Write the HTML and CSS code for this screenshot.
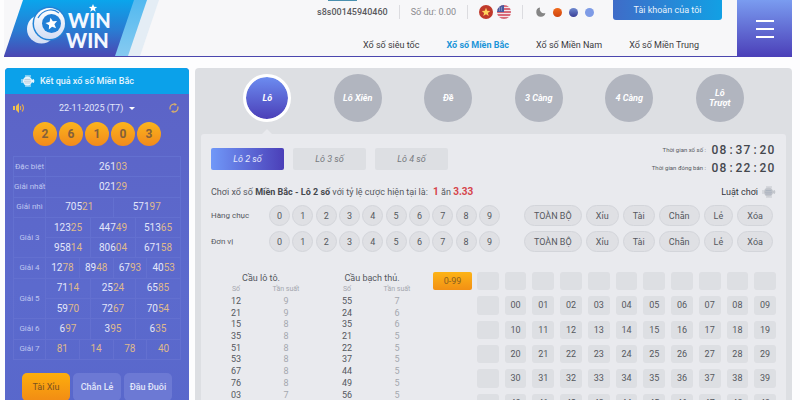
FILE: index.html
```html
<!DOCTYPE html>
<html lang="vi">
<head>
    <meta charset="UTF-8">
    <meta name="viewport" content="width=device-width, initial-scale=1.0">
    <title>WIN WIN - Xổ số Miền Bắc</title>
    <link rel="stylesheet" href="styles.css">
</head>
<body>

<svg width="0" height="0" class="defs">
    <defs>
        <linearGradient id="logoBg" x1="0" y1="0" x2="0" y2="1">
            <stop offset="0" stop-color="#0aa5ec"/>
            <stop offset="0.55" stop-color="#2a7bd2"/>
            <stop offset="1" stop-color="#4a48b4"/>
        </linearGradient>
        <linearGradient id="band" x1="0" y1="0" x2="0" y2="1">
            <stop offset="0" stop-color="#52b9f0"/>
            <stop offset="1" stop-color="#86caf0"/>
        </linearGradient>
        <linearGradient id="ballBg" x1="0" y1="0" x2="0" y2="1">
            <stop offset="0" stop-color="#ffffff"/>
            <stop offset="1" stop-color="#d3def4"/>
        </linearGradient>
    </defs>
    <symbol id="globe" viewBox="0 0 14 12">
        <path d="M4 1h6M4 11h6M1 4v4M12 4l1 2-1 2" fill="none" stroke="currentColor" stroke-width="1"/>
        <circle cx="6.5" cy="6" r="4.6" fill="currentColor"/>
        <path d="M3.5 4.4h6M3 6.2h7M3.5 8h6" stroke="#8f9bb0" stroke-opacity="0.6" stroke-width="0.8"/>
        <path d="M10 4.8h3v2.4h-3z" fill="currentColor"/>
    </symbol>
</svg>

<header class="header">
    <a class="logo" href="#">
        <svg width="156" height="56" viewBox="0 0 156 56">
            <path d="M140 0h15l-19 56h-16z" fill="#e4edf5"/>
            <path d="M126 0h17l-19 56h-17z" fill="url(#band)"/>
            <path d="M19 0h111l-19 56H0z" fill="url(#logoBg)"/>
            <circle cx="37.500" cy="29" r="14.500" fill="url(#ballBg)"/>
            <circle cx="45.500" cy="23.500" r="17" fill="#2383d6"/>
            <circle cx="45.500" cy="23.500" r="15.500" fill="url(#ballBg)"/>
            <path d="M34 18c5-9 15-10 21-5" fill="none" stroke="#2a84d8" stroke-width="1.200"/>
            <circle cx="47.500" cy="23.500" r="9.500" fill="#217fd6"/>
            <path d="M47.500 17.700l1.700 3.900 4.200.4-3.200 2.800 1 4.200-3.700-2.200-3.700 2.200 1-4.200-3.200-2.800 4.200-.4z" fill="#fff" transform="rotate(-10 47.5 23.5)"/>
            <path d="M89 4l1.200 2.700 3 .2-2.300 1.900.8 2.900L89 10.100l-2.700 1.600.8-2.900-2.300-1.900 3-.2z" fill="#fff"/>
            <text class="logo-text"><tspan x="64" y="28">WIN</tspan><tspan x="62" y="48">WIN</tspan></text>
        </svg>
    </a>
    <div class="header-main">
        <div class="top-bar">
            <span class="user">s8s00145940460</span>
            <span class="balance">Số dư: 0.00</span>
            <span class="flags">
                <svg width="14" height="14" viewBox="0 0 14 14">
                    <circle cx="7" cy="7" r="7" fill="#c0392b"/>
                    <path d="M7 2.800l1.200 2.900 3 .2-2.300 2 .8 3L7 9.300l-2.700 1.600.8-3-2.300-2 3-.2z" fill="#ffd35c"/>
                </svg>
                <svg width="14" height="14" viewBox="0 0 14 14">
                    <clipPath id="flagClip"><circle cx="7" cy="7" r="7"/></clipPath>
                    <g clip-path="url(#flagClip)">
                        <path d="M0 0h14v14H0z" fill="#f3e6e8"/>
                        <path d="M0 1h14M0 4h14M0 7h14M0 10h14M0 13h14" stroke="#cf4254" stroke-width="1.600"/>
                        <path d="M0 0h7v7H0z" fill="#4a5aa0"/>
                        <path d="M2 3h4M2 5h4" stroke="#c9cfe6" stroke-width="0.800" stroke-dasharray="1 1"/>
                    </g>
                </svg>
            </span>
            <span class="themes">
                <svg width="10" height="10" viewBox="0 0 10 10"><path d="M4 .6A4.600 4.600 0 1 0 9.400 6 4.200 4.200 0 0 1 4 .6z" fill="#858585"/></svg>
                <i class="dot dot-orange"></i>
                <i class="dot dot-navy"></i>
                <i class="dot dot-blue"></i>
            </span>
            <button class="account">Tài khoản của tôi</button>
        </div>
        <nav class="nav">
            <a href="#">Xổ số siêu tốc</a>
            <a href="#" class="active">Xổ số Miền Bắc</a>
            <a href="#">Xổ số Miền Nam</a>
            <a href="#">Xổ số Miền Trung</a>
        </nav>
    </div>
    <button class="menu" aria-label="Menu"><i></i><i></i><i></i></button>
</header>

<main class="container">
    <aside class="result">
        <h2 class="result-title">
            <svg width="14" height="12"><use href="#globe"/></svg>
            Kết quả xổ số Miền Bắc
        </h2>
        <div class="date-row">
            <svg width="12" height="10" viewBox="0 0 12 10">
                <path d="M0 3h2v4H0zM3 3l3-3v10L3 7z" fill="#f0bf4c"/>
                <path d="M7.500 3v4M9 1.500q3 3.500 0 7" fill="none" stroke="#d9a558" stroke-width="1.200"/>
            </svg>
            <span class="date">
                <select aria-label="Ngày"><option>22-11-2025 (T7)</option></select>
            </span>
            <svg width="10" height="10" viewBox="0 0 10 10">
                <path d="M1.300 6.500A4 4 0 0 1 6 1.200M8.700 3.500A4 4 0 0 1 4 8.800" fill="none" stroke="#d9b06a" stroke-width="1.200"/>
                <path d="M5.500 0l2.500 1.500-2.500 1.600zM4.500 10L2 8.500l2.500-1.600z" fill="#d9b06a"/>
            </svg>
        </div>
        <div class="balls"><b>2</b><b>6</b><b>1</b><b>0</b><b>3</b></div>
        <table class="prizes">
            <colgroup>
                <col class="label-col"><col><col><col><col><col><col><col><col><col><col><col><col>
            </colgroup>
            <tr><th>Đặc biệt</th><td colspan="12">261<em>03</em></td></tr>
            <tr><th>Giải nhất</th><td colspan="12">021<em>29</em></td></tr>
            <tr><th>Giải nhì</th><td colspan="6">705<em>21</em></td><td colspan="6">571<em>97</em></td></tr>
            <tr><th rowspan="2">Giải 3</th><td colspan="4">123<em>25</em></td><td colspan="4">447<em>49</em></td><td colspan="4">513<em>65</em></td></tr>
            <tr><td colspan="4">958<em>14</em></td><td colspan="4">806<em>04</em></td><td colspan="4">671<em>58</em></td></tr>
            <tr><th>Giải 4</th><td colspan="3">12<em>78</em></td><td colspan="3">89<em>48</em></td><td colspan="3">67<em>93</em></td><td colspan="3">40<em>53</em></td></tr>
            <tr><th rowspan="2">Giải 5</th><td colspan="4">71<em>14</em></td><td colspan="4">25<em>24</em></td><td colspan="4">65<em>85</em></td></tr>
            <tr><td colspan="4">59<em>70</em></td><td colspan="4">72<em>67</em></td><td colspan="4">70<em>54</em></td></tr>
            <tr><th>Giải 6</th><td colspan="4">6<em>97</em></td><td colspan="4">3<em>95</em></td><td colspan="4">6<em>35</em></td></tr>
            <tr><th>Giải 7</th><td colspan="3"><em>81</em></td><td colspan="3"><em>14</em></td><td colspan="3"><em>78</em></td><td colspan="3"><em>40</em></td></tr>
        </table>
        <div class="stat-tabs">
            <button class="active">Tài Xỉu</button>
            <button>Chẵn Lẻ</button>
            <button>Đầu Đuôi</button>
        </div>
    </aside>

    <section class="game">
        <div class="types">
            <button class="active">Lô</button>
            <button>Lô Xiên</button>
            <button>Đề</button>
            <button>3 Càng</button>
            <button>4 Càng</button>
            <button>Lô<br>Trượt</button>
        </div>

        <div class="board">
            <div class="board-top">
                <div class="modes">
                    <button class="active">Lô 2 số</button>
                    <button>Lô 3 số</button>
                    <button>Lô 4 số</button>
                </div>
                <div class="clocks">
                    <div class="clock">Thời gian xổ số : <span class="time"><i>0</i><i>8</i><i>:</i><i>3</i><i>7</i><i>:</i><i>2</i><i>0</i></span></div>
                    <div class="clock">Thời gian đóng bán : <span class="time"><i>0</i><i>8</i><i>:</i><i>2</i><i>2</i><i>:</i><i>2</i><i>0</i></span></div>
                </div>
            </div>

            <div class="info">
                <p>Chơi xổ số <strong>Miền Bắc - Lô 2 số</strong> với tỷ lệ cược hiện tại là: <span class="rate"><b>1</b> ăn <b>3.33</b></span></p>
                <a class="rules" href="#">Luật chơi <svg width="14" height="12"><use href="#globe"/></svg></a>
            </div>

            <div class="pick">
                <span class="pick-label">Hàng chục</span>
                <div class="digits">
                    <button>0</button><button>1</button><button>2</button><button>3</button><button>4</button><button>5</button><button>6</button><button>7</button><button>8</button><button>9</button>
                </div>
                <div class="pills">
                    <button>TOÀN BỘ</button><button>Xỉu</button><button>Tài</button><button>Chẵn</button><button>Lẻ</button><button>Xóa</button>
                </div>
            </div>
            <div class="pick">
                <span class="pick-label">Đơn vị</span>
                <div class="digits">
                    <button>0</button><button>1</button><button>2</button><button>3</button><button>4</button><button>5</button><button>6</button><button>7</button><button>8</button><button>9</button>
                </div>
                <div class="pills">
                    <button>TOÀN BỘ</button><button>Xỉu</button><button>Tài</button><button>Chẵn</button><button>Lẻ</button><button>Xóa</button>
                </div>
            </div>

            <div class="bottom">
                <table class="stats">
                    <caption>Cầu lô tô.</caption>
                    <tr><th>Số</th><th>Tần suất</th></tr>
                    <tr><td>12</td><td>9</td></tr>
                    <tr><td>21</td><td>9</td></tr>
                    <tr><td>15</td><td>8</td></tr>
                    <tr><td>35</td><td>8</td></tr>
                    <tr><td>51</td><td>8</td></tr>
                    <tr><td>53</td><td>8</td></tr>
                    <tr><td>67</td><td>8</td></tr>
                    <tr><td>76</td><td>8</td></tr>
                    <tr><td>03</td><td>7</td></tr>
                </table>
                <table class="stats">
                    <caption>Cầu bạch thủ.</caption>
                    <tr><th>Số</th><th>Tần suất</th></tr>
                    <tr><td>55</td><td>7</td></tr>
                    <tr><td>24</td><td>6</td></tr>
                    <tr><td>35</td><td>6</td></tr>
                    <tr><td>21</td><td>5</td></tr>
                    <tr><td>22</td><td>5</td></tr>
                    <tr><td>37</td><td>5</td></tr>
                    <tr><td>44</td><td>5</td></tr>
                    <tr><td>49</td><td>5</td></tr>
                    <tr><td>56</td><td>5</td></tr>
                </table>
                <button class="range">0-99</button>
                <div class="numbers">
                    <i></i><i></i><i></i><i></i><i></i><i></i><i></i><i></i><i></i><i></i><i></i>
                    <i></i><button>00</button><button>01</button><button>02</button><button>03</button><button>04</button><button>05</button><button>06</button><button>07</button><button>08</button><button>09</button>
                    <i></i><button>10</button><button>11</button><button>12</button><button>13</button><button>14</button><button>15</button><button>16</button><button>17</button><button>18</button><button>19</button>
                    <i></i><button>20</button><button>21</button><button>22</button><button>23</button><button>24</button><button>25</button><button>26</button><button>27</button><button>28</button><button>29</button>
                    <i></i><button>30</button><button>31</button><button>32</button><button>33</button><button>34</button><button>35</button><button>36</button><button>37</button><button>38</button><button>39</button>
                    <i></i><button>40</button><button>41</button><button>42</button><button>43</button><button>44</button><button>45</button><button>46</button><button>47</button><button>48</button><button>49</button>
                </div>
            </div>
        </div>
    </section>
</main>

</body>
</html>
```

FILE: styles.css
```css
* {
    box-sizing: border-box;
}

html {
    scrollbar-width: none;
}

body {
    margin: 0;
    background-color: #fdfdfe;
    font-family: Roboto, "Liberation Sans", sans-serif;
    font-size: 9px;
    line-height: 12px;
    color: #55585e;
}

button {
    font: inherit;
    color: inherit;
    border: none;
    padding: 0;
    cursor: pointer;
}

a {
    color: inherit;
    text-decoration: none;
}

svg {
    display: block;
    flex: none;
}

.defs {
    position: absolute;
}

/* header */
.header {
    display: flex;
    height: 57px;
    margin: 0 8px 0 4px;
    background-color: #f7f7f9;
    border-bottom: 1px solid #4b46ae;
}

.logo-text {
    font-family: Lato, sans-serif;
    font-weight: 900;
    font-size: 20px;
    fill: #f4f8ff;
}

.header-main {
    flex: 1;
    display: flex;
    flex-direction: column;
    justify-content: space-between;
}

.top-bar {
    display: flex;
    justify-content: flex-end;
    padding-right: 15px;
}

.top-bar > span {
    display: flex;
    align-items: center;
    height: 14px;
    margin-top: 5px;
    padding: 0 11px;
    border-right: 1px solid #dcdce0;
}

.top-bar .user {
    position: relative;
    color: #5a5a5e;
    font-weight: 500;
}

.user::before {
    content: "";
    position: absolute;
    top: -5px;
    left: 22px;
    width: 29px;
    height: 1px;
    background-color: #4a8fae;
}

.top-bar .balance {
    color: #8a8a8e;
}

.top-bar .flags {
    gap: 4px;
}

.top-bar .themes {
    gap: 7px;
    padding: 0 19px 0 13px;
    border-right: none;
}

.dot {
    width: 9px;
    height: 9px;
    border-radius: 50%;
}

.dot-orange {
    background: linear-gradient(#f06a1c, #cf4410);
}

.dot-navy {
    background: linear-gradient(#6f8ad0, #3a3f96);
}

.dot-blue {
    background-color: #7e9be6;
}

.account {
    width: 109px;
    height: 20px;
    border-radius: 0 0 3px 3px;
    background: linear-gradient(90deg, #3f6cc8, #12a0e4);
    color: #e8f2fc;
}

.nav {
    display: flex;
    justify-content: flex-end;
    gap: 27px;
    padding: 0 38px 5px 0;
    color: #3a3a3e;
}

.nav .active {
    color: #1b95d8;
    font-weight: bold;
}

.menu {
    display: flex;
    flex-direction: column;
    align-items: center;
    justify-content: center;
    gap: 6px;
    width: 55px;
    height: 57px;
    background: linear-gradient(#7a9cf0, #4b3fb8);
}

.menu i {
    width: 18px;
    height: 2px;
    background-color: #fff;
}

/* layout */
.container {
    display: grid;
    grid-template-columns: 184px 1fr;
    gap: 6px;
    padding: 11px 8px 0 5px;
}

/* result panel */
.result {
    border-radius: 4px 4px 0 0;
    overflow: hidden;
    background: linear-gradient(#5c63c6, #5c6acd 60%, #5867cb);
    color: #e2e6fa;
}

.result-title {
    display: flex;
    align-items: center;
    gap: 5px;
    height: 26px;
    margin: 0;
    padding: 0 16px;
    background-color: #0ba1ea;
    font-size: 9px;
    font-weight: 500;
    color: #e6f5fd;
}

.date-row {
    display: flex;
    align-items: center;
    justify-content: space-between;
    height: 28px;
    padding: 0 10px 0 8px;
}

.date {
    display: flex;
    align-items: center;
    gap: 5px;
}

.date::after {
    content: "";
    border: 3px solid transparent;
    border-top-color: #fff;
    border-bottom: none;
}

.date select {
    appearance: none;
    border: none;
    padding: 0;
    background: none;
    font: inherit;
    color: inherit;
}

.balls {
    display: flex;
    justify-content: center;
    gap: 2px;
    margin-bottom: 10px;
}

.balls b {
    width: 24px;
    height: 24px;
    border-radius: 50%;
    background: linear-gradient(#fbb41c, #f28a1c);
    font-size: 12px;
    line-height: 24px;
    text-align: center;
    color: #84603a;
}

.prizes {
    table-layout: fixed;
    width: 168px;
    height: 204px;
    margin: 0 auto;
    border-collapse: collapse;
    text-align: center;
}

.label-col {
    width: 32px;
}

.prizes th,
.prizes td {
    padding: 0;
    border: 1px solid #6370d0;
}

.prizes th {
    font-size: 8px;
    font-weight: normal;
    color: #bfc6f0;
    white-space: nowrap;
}

.prizes td {
    font-size: 10px;
}

.prizes em {
    font-style: normal;
    color: #dfb98c;
}

.stat-tabs {
    display: grid;
    grid-template-columns: repeat(3, 1fr);
    gap: 3px;
    padding: 13px 17px;
}

.stat-tabs button {
    height: 28px;
    border-radius: 5px;
    background-color: #6c79d4;
    font-weight: 500;
}

.stat-tabs .active {
    background: linear-gradient(#fdae0c, #f28c14);
    color: #7a5220;
    font-weight: normal;
}

/* game panel */
.game {
    padding: 6px;
    border-radius: 4px 4px 0 0;
    background-color: #dddfe3;
}

.types {
    display: grid;
    grid-template-columns: repeat(6, 1fr);
    justify-items: center;
    padding: 0 21px 12px;
}

.types button {
    position: relative;
    width: 48px;
    height: 48px;
    border-radius: 50%;
    background-color: #b1b5bf;
    font-weight: bold;
    font-style: italic;
    line-height: 10px;
    color: #fff;
}

.types .active {
    border: 3px solid #fff;
    background: linear-gradient(#6c8cf0, #4b3fb8);
    background-clip: padding-box;
    background-color: #fff;
}

.types .active::after {
    content: "";
    position: absolute;
    top: 52px;
    left: 16px;
    border: 5px solid transparent;
    border-top: none;
    border-bottom-color: #e9eaee;
}

.board {
    padding: 14px 10px;
    border-radius: 3px;
    background-color: #e9eaee;
}

.board-top,
.info {
    display: flex;
    justify-content: space-between;
}

.modes {
    display: flex;
    gap: 9px;
}

.modes button {
    width: 73px;
    height: 22px;
    border-radius: 2px;
    background-color: #dddfe3;
    font-style: italic;
    color: #777a80;
}

.modes .active {
    background: linear-gradient(90deg, #7098f8, #4b3fb8);
    color: #e4e8fc;
}

.clocks {
    display: flex;
    flex-direction: column;
    gap: 6px;
    padding-right: 1px;
    margin-top: -4px;
}

.clock {
    display: flex;
    align-items: center;
    justify-content: flex-end;
    gap: 5px;
    font-size: 6px;
}

.time {
    display: flex;
    font-size: 12px;
    font-weight: 500;
    color: #44474d;
}

.time i {
    width: 8px;
    font-style: normal;
    text-align: center;
}

.info {
    align-items: center;
    height: 16px;
    margin: 10px 0 5px;
}

.info p {
    margin: 0;
}

.info strong {
    color: #44474d;
}

.rate {
    margin-left: 3px;
}

.rate b {
    font-size: 10px;
    color: #d6444a;
}

.rules {
    display: flex;
    align-items: center;
    gap: 4px;
    color: #33363c;
}

.rules svg {
    color: #c3c6cc;
}

.pick {
    display: flex;
    align-items: center;
    margin-bottom: 5px;
}

.pick-label {
    width: 58px;
    font-size: 8px;
}

.digits {
    flex: 1;
    display: flex;
    justify-content: space-between;
    max-width: 231px;
    margin-right: 24px;
}

.digits button,
.pills button {
    height: 21px;
    border: 1px solid #d3d5da;
    border-radius: 11px;
    background-color: #dfe0e4;
}

.digits button {
    width: 21px;
}

.pills {
    flex: 1;
    display: flex;
    justify-content: space-between;
    padding-right: 3px;
}

.pills button {
    padding: 0 9px;
}

.bottom {
    display: flex;
    align-items: flex-start;
    gap: 11px;
    padding-top: 15px;
}

.stats {
    table-layout: fixed;
    width: 100px;
    height: 117px;
    border-collapse: collapse;
    text-align: center;
}

.stats caption {
    color: #55585e;
}

.stats th,
.stats td {
    padding: 0;
    line-height: 11px;
}

.stats th {
    font-size: 7px;
    font-weight: normal;
    color: #a5a8ae;
}

.stats td + td {
    color: #a5a8ae;
}

.range {
    flex: none;
    width: 39px;
    height: 18px;
    margin-right: -6px;
    border-radius: 2px;
    background: linear-gradient(#fdb416, #f29014);
    color: #8a6020;
}

.numbers {
    flex: 1;
    display: grid;
    grid-template-columns: repeat(11, 1fr);
    grid-auto-rows: 1fr;
    gap: 6px;
    height: 140px;
}

.numbers i,
.numbers button {
    border-radius: 3px;
    background-color: #dddfe3;
}
```
